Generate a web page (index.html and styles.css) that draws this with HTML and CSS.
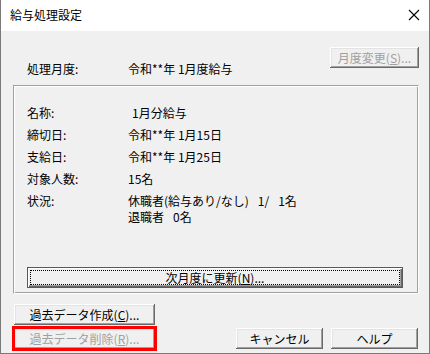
FILE: index.html
```html
<!DOCTYPE html>
<html lang="ja">
<head>
    <meta charset="UTF-8">
    <title>給与処理設定</title>
    <link rel="stylesheet" href="styles.css">
</head>
<body>
    <div class="window">
        <div class="titlebar">
            <span class="title">給与処理設定</span>
            <svg class="close" width="12" height="12" viewBox="0 0 12 12">
                <path d="M1 1 L11 11 M11 1 L1 11" stroke="#000" stroke-width="1.1" fill="none"/>
            </svg>
        </div>
        <div class="client">
            <div class="head-row">
                <span class="head-label">処理月度:</span>
                <span class="head-value">令和**年 1月度給与</span>
                <button class="btn btn-month" disabled>月度変更(<u>S</u>)...</button>
            </div>

            <div class="group">
                <div class="info">
                    <span>名称:</span><span class="indent">1月分給与</span>
                    <span>締切日:</span><span>令和**年 1月15日</span>
                    <span>支給日:</span><span>令和**年 1月25日</span>
                    <span>対象人数:</span><span>15名</span>
                    <span>状況:</span>
                    <span>休職者(給与あり/なし)<span class="gap">1/</span><span class="gap">1名</span><br>退職者<span class="gap">0名</span></span>
                </div>
                <button class="btn btn-default">次月度に更新(<u>N</u>)...</button>
            </div>

            <div class="bottom">
                <div class="left-btns">
                    <button class="btn btn-wide">過去データ作成(<u>C</u>)...</button>
                    <button class="btn btn-wide marked" disabled>過去データ削除(<u>R</u>)...</button>
                </div>
                <div class="right-btns">
                    <button class="btn btn-small">キャンセル</button>
                    <button class="btn btn-small">ヘルプ</button>
                </div>
            </div>
        </div>
    </div>
</body>
</html>
```

FILE: styles.css
```css
body {
    margin: 0;
    padding: 0;
    background: #f0f0f0;
    font-family: "Noto Sans CJK JP", "Noto Sans", sans-serif;
    font-size: 12px;
    color: #000;
}
.window {
    width: 430px;
    height: 354px;
    box-sizing: border-box;
    border: 1px solid #7a7a7a;
    border-top: none;
    background: #f0f0f0;
    display: flex;
    flex-direction: column;
}
.titlebar {
    height: 31px;
    background: #fff;
    display: flex;
    align-items: center;
    justify-content: space-between;
    padding: 0 9px 0 9px;
    flex-shrink: 0;
}
.title {
    font-size: 12px;
    margin-top: -2px;
}
.close {
    margin-top: -1px;
}
.client {
    flex: 1;
    padding: 16px 10px 0 12px;
    display: flex;
    flex-direction: column;
}
.head-row {
    display: grid;
    grid-template-columns: 115px 1fr 89px;
    align-items: start;
    height: 38px;
}
.head-label,
.head-value {
    margin-top: 14px;
    line-height: 16px;
}
.head-label {
    padding-left: 14px;
}
.indent {
    padding-left: 4px;
}
.gap {
    margin-left: 9px;
}
.btn {
    font-family: "Noto Sans CJK JP", "Noto Sans", sans-serif;
    font-size: 12px;
    color: #000;
    background: #f0f0f0;
    border: none;
    padding: 0;
    height: 21px;
    line-height: 19px;
    box-shadow: inset -1px -1px #696969, inset 1px 1px #fff, inset -2px -2px #a0a0a0, inset 2px 2px #e3e3e3;
}
.btn:disabled {
    color: #a0a0a0;
}
.btn-month {
    width: 89px;
}
.group {
    height: 209px;
    box-sizing: border-box;
    border: 1px solid;
    border-color: #a0a0a0 #fff #fff #a0a0a0;
    box-shadow: inset 1px 1px #fff, inset -1px -1px #a0a0a0;
    padding: 19px 13px 5px 13px;
    display: flex;
    flex-direction: column;
}
.info {
    display: grid;
    grid-template-columns: 101px 1fr;
    row-gap: 6px;
    line-height: 16px;
}
.btn-default {
    margin-top: auto;
    width: 376px;
    border: 1px solid #5a5a5a;
    box-shadow: inset 1px 1px #fff, inset -1px -1px #696969, inset -2px -2px #a0a0a0;
    outline: 1px dotted #000;
    outline-offset: -4px;
    line-height: 17px;
}
.bottom {
    display: flex;
    justify-content: space-between;
    padding-top: 10px;
}
.left-btns {
    display: flex;
    flex-direction: column;
    gap: 3px;
    margin-left: 1px;
}
.btn-wide {
    width: 141px;
}
.marked {
    outline: 3px solid #f00;
    outline-offset: -1px;
}
.right-btns {
    display: flex;
    align-items: flex-end;
    gap: 8px;
    margin-right: 1px;
}
.btn-small {
    width: 87px;
}
```
